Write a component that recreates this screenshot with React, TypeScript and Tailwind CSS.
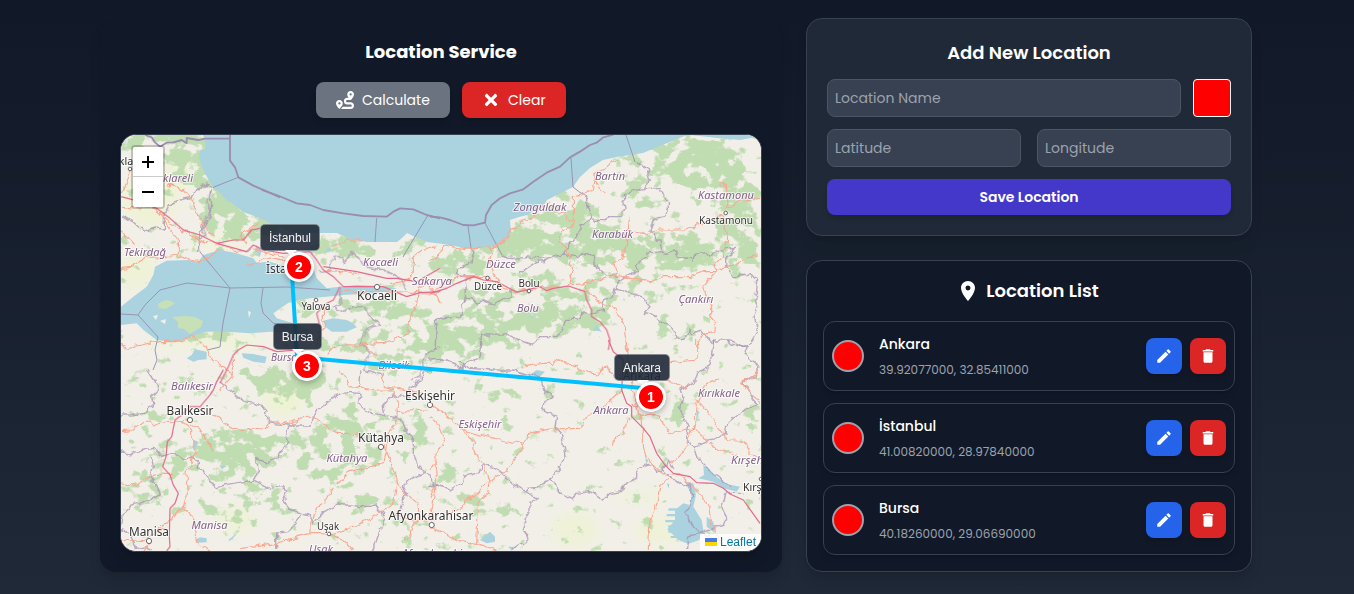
import { FaRoute } from "react-icons/fa6";
import { FaTimes } from "react-icons/fa";
import { MdDelete, MdEdit, MdLocationOn } from "react-icons/md";

type Place = { id: number; name: string; coords: string };

const places: Place[] = [
  { id: 1, name: "Ankara", coords: "39.92077000, 32.85411000" },
  { id: 2, name: "İstanbul", coords: "41.00820000, 28.97840000" },
  { id: 3, name: "Bursa", coords: "40.18260000, 29.06690000" },
];

/* Each map sheet is drawn on a grid three times finer than the map itself. */
type Sheet = { at: string; roads: string; motorways: string; borders: string; maritime?: string; water?: string };

const sheets: Sheet[] = [
  {
    at: "translate(120 134) scale(.33333)",
    roads: "M150 150 185 165 215 195 225 225 240 260 280 310M30 108 3 180M3 220 60 222 100 222M140 150 190 165M3 290 40 330M375 290 365 310 380 330M375 295 400 285",
    motorways: "",
    borders: "M280 160 262 150 240 155 232 168 215 190 190 195 150 210 130 240 130 285 100 282 70 292 40 265 10 245M270 165 268 190 275 210 272 240 265 260 240 295 235 350",
    maritime: "M75 3 95 10 105 25 120 38 140 26 160 25 185 18 200 28 200 12 235 18 255 14 330 14M330 0 330 80 345 100 355 130 400 155 440 172 480 190",
  },
  {
    at: "translate(110 190) scale(.33333)",
    roads:
      "M33 55 100 50 140 60 180 100 210 115 270 150 320 165M33 235 60 232 110 205 150 203 200 195 240 210 270 215 330 180M205 200 205 150 180 120 160 90M320 160 345 170 370 185 440 180 520 200M440 100 400 130 400 150M33 463 50 478 90 465 150 455 200 455 250 440 290 470 300 500 350 540 370 555M370 500 370 555 330 600M650 490 690 465 730 468 760 465 800 500M980 270 930 290 910 370 890 415 900 430 820 460 750 465M840 280 880 275 910 250 910 200 940 180 980 170M650 350 640 370 640 410 620 470M670 170 690 155 720 150 760 150M640 240 690 245 740 250M690 300 760 308 800 303 990 310M410 230 470 200 540 215",
    motorways:
      "M33 20 90 35 140 55 180 85 220 120 270 135 300 150 320 160 370 150 400 150 425 120 450 115M320 160 410 185 430 165 460 180 520 190 600 185 620 210 640 240 670 260 690 280 700 290 820 290 890 320 930 308 990 305M640 230 740 245 830 265 860 265 920 275 990 235M690 290 670 330 640 345 620 370 630 410M600 490 560 480 500 485 460 470 410 465 385 480 370 495 355 530 330 580",
    borders:
      "M300 0 290 40 305 60 275 110 285 140 265 150 270 185M690 290 690 340 670 350 700 370 730 350 760 350 780 380 810 400 780 410 765 430 750 460 780 490 760 540 820 560M990 470 960 480 940 510 930 560 900 575M630 245 660 240 665 210 680 195 705 215 730 190 745 200 760 230 820 240 880 270 890 300",
    maritime: "M455 0 500 15 560 40 600 45 640 60 700 70 760 78 830 80 850 65 870 55 910 58 950 75 990 85",
    water:
      "M33 350 70 320 110 290 130 255 135 230 170 212 235 210 265 215 280 195 330 180 380 190 430 205 440 218 480 215 530 230 610 235 620 265 650 295 690 290 740 285 800 288 860 295 830 305 760 312 700 315 650 320 600 325 540 335 490 370 500 385 550 400 600 420 590 432 480 425 420 430 350 425 290 425 240 440 210 455 180 455 140 450 100 420 80 400 33 405ZM230 505 245 495 255 478 290 485 290 508 265 510 250 515ZM395 490 430 492 470 500 465 520 430 515 400 503ZM640 392 670 385 710 390 730 400 740 412 710 425 665 425 648 412ZM600 170 620 165 605 195ZM440 165 455 180 450 200 435 180ZM655 170 665 180 645 190Z",
  },
  {
    at: "translate(110 370) scale(.33333)",
    roads:
      "M33 182 70 180 100 155 120 153 130 168 170 155 240 150M215 155 230 165 245 180 245 210 260 250 245 260 245 280 228 310 232 370 220 410 200 430 185 450 150 470M220 410 240 430 250 450 260 520 300 540M33 342 80 345 100 335 120 320 150 310 185 310M240 165 265 175 280 190 290 215 310 245M310 135 345 160 370 175 400 178 440 173 470 175 485 155 545 160 590 138 630 155 680 190 750 190M390 535 440 530 500 520 530 510 600 490 660 492 720 475 760 455 800 435 850 400 860 340 850 300 830 240 820 220M600 490 600 460 630 400 650 390 670 350M675 345 690 335 720 305 780 290 820 280 830 240 835 190 860 160 862 100 850 60 800 60 720 50 715 30 690 0M860 125 950 120M862 340 890 375 920 400 925 430 900 500 880 520M660 492 700 510 730 540M850 430 900 450 980 450M820 0 820 50 940 70M33 510 100 515 120 500 160 475M960 450 970 400 975 345M960 300 980 270M100 543 120 515",
    motorways: "M340 0 320 35 310 60 300 75 270 110 240 110 215 135 195 150 185 200 172 215 168 260 158 290 180 315 190 345 205 370 195 400 180 415 178 500 180 530 170 543",
    borders:
      "M33 245 60 255 80 245 100 240 130 235 160 260 180 252 200 255 220 268 245 255 265 275 265 295 290 315 300 335 320 350 380 338 430 330 445 310 440 265 470 280 500 265 520 235 535 215 530 185 545 165 600 165 610 140 625 120 660 90 690 70 720 68 750 70 745 100 760 115 790 130 870 145 885 180 910 190 910 260 930 285 940 310 960 315 970 345 985 345M330 35 370 70 400 95 430 100 460 110 470 115 470 140 480 160 540 165M430 330 480 355 520 350 530 365 520 390 540 420 580 430 600 435 610 455 640 430 680 405 720 405 750 410 800 408 825 440 800 510 790 543M580 430 550 470 530 485 500 490 500 540M120 255 130 290 120 320 140 345 150 370 100 400 60 410 40 430 33 480 60 495 80 535 110 530 125 540M940 310 900 330 880 350 890 370 865 430M110 0 130 30 145 60 125 80 130 110 100 130 60 135 33 135M750 0 745 60M985 0 945 0 940 20 900 60 900 75 850 75 820 110 825 140",
    water: "M255 510 270 502 290 505 290 517 265 518ZM250 210 265 215 255 245 250 230ZM355 510 380 490 378 495 360 513ZM330 285 350 288 335 298Z",
  },
  {
    at: "translate(430 130) scale(.33333)",
    roads:
      "M0 390 20 385 30 365 40 345 80 352 120 358 200 348 225 335 240 310 245 295 265 290 275 270 300 265 360 210M360 225 385 245 400 250 415 270 430 270 430 205 450 200 490 180 495 150 495 130 520 115 540 100 570 90M495 150 510 175 530 190M430 270 425 290 400 300 385 325 420 380 425 430 415 465 470 460 560 435 600 445 660 455 700 440 780 440 820 425 860 425 890 410 930 395 950 380 990 378M555 400 575 385 580 365 590 350 590 320 595 265M555 400 562 435M595 300 620 310 650 315 690 300 770 300 790 290 880 255 890 330 880 380 855 405 860 425 820 470 830 500 845 530 845 560 857 580 855 605 820 610 810 630 800 660M870 155 890 170 890 240 910 225 930 210 960 208 990 205M180 350 188 370 180 390 185 410 190 430 210 465M460 460 480 490 500 510 550 530 570 560 585 590 595 660M0 480 50 460 90 440 170 440 210 465 260 485 330 475 415 465M0 470 20 500 35 520",
    motorways: "M0 490 50 475 80 460 130 440 160 450 200 455 260 487 330 470 350 482 370 475 415 468 465 485 470 510 485 540 485 560 510 575 530 600 540 630 535 660",
    borders:
      "M615 95 640 108 660 120 650 140 655 155 645 175 615 182 590 190 580 200 585 240 570 260 535 260 520 272 485 270 480 240 470 225 470 200 455 190M640 180 690 175 700 200 715 215 715 240 700 260 670 270 660 300 680 330 690 330 695 365 650 370 650 385 620 400 620 425 600 430 570 450 560 475M690 365 710 370 730 360 755 385 790 390 795 370 815 365 830 375 850 368 910 355 905 370 890 385 890 410 910 440 930 440 960 430 980 450 975 500 985 520 975 560 985 600 960 640 940 650 900 630 850 630 850 645 815 600 785 610 775 600 765 628 745 628 720 590 690 575 670 555 640 550 660 530 640 505 600 490 580 480 555 475 550 500 520 510 520 545 490 550 460 545 450 565 410 565 400 600 380 620 330 620 300 645 270 635 240 615 155 615 150 660M215 375 235 382 290 380 345 385 365 382 400 375 420 340 450 310 450 290 485 270M400 375 440 380 470 370 490 380 500 410 530 435 570 440M122 355 132 370 115 410 80 415 80 430 105 440 110 500 95 530 95 560 50 565 20 570 15 660M110 500 140 520 160 510 190 520 240 500 240 480M270 430 290 415 320 395 350 390 365 382",
    maritime: "M0 260 30 262 60 270 100 285 130 286 165 278 168 255 185 225 210 205 240 190 280 178 310 155 350 128 390 110 420 82 450 65 480 45 500 38 520 22 550 14",
    water: "M300 560 315 553 303 565ZM490 600 515 605 500 585ZM750 628 770 622 755 632Z",
  },
  {
    at: "translate(430 340) scale(.33333)",
    roads:
      "M5 195 50 225 70 245 100 270 150 285 280 315 300 280 360 267 450 265 460 240 480 220 530 195 575 150M280 315 260 350 240 380 205 405 170 430 130 470 110 480 100 500 60 520M100 270 130 310 135 340 160 370 170 400 180 430 175 460 150 480 145 500 140 610 90 605 60 590 0 560M0 230 20 250 45 310 15 340 15 370 20 420 0 470M285 80 340 70 365 70 385 55 410 75 440 80 450 95 500 105 515 85 530 80 550 110 590 120M590 0 595 50 600 100 610 150 620 200 640 270 640 320 645 340 665 370 690 390 720 410 690 440 680 490 660 540 655 630M605 190 620 200 630 230 665 222 690 230 710 270 730 280 765 268 790 265 800 250 800 200 820 150 830 130 870 120M790 265 775 290 775 315 745 350 720 370M690 120 735 128 760 145 780 130M800 0 800 60 720 68M800 180 850 240 880 280 890 300 930 300 960 320 960 345 990 350M790 265 830 300 850 320 880 330 920 345M720 400 750 405 790 440 820 480 840 500 845 550 870 600M545 315 550 300 575 280 600 235M140 610 170 620 200 630M990 80 970 110 935 130 960 160 990 185",
    motorways: "M535 0 550 35 580 60 575 150 590 190 605 200 605 230 640 265 660 290 680 340 705 375 730 400 780 410 800 428 850 430 880 445 900 462 940 480 965 515 990 550",
    borders:
      "M0 60 45 58 80 75 90 90 110 65 150 55 155 10 145 0M85 65 120 85 190 90 250 90 300 105 330 110 345 155 370 170 345 185 340 210 355 220 380 230 375 260 395 280 400 320 405 350 395 380 355 420 320 445 280 450 245 430 220 400 190 385 160 375 150 395 105 405 100 430 60 450 20 435 0 440M355 415 380 430 390 460 430 480 440 460 480 455 520 480 540 460 575 455 580 435 620 415 620 385 665 370 680 395 710 380 715 360 730 385M280 450 325 475 300 490 300 515 290 530 280 570 295 600 240 630M850 0 850 30 840 80 800 100 790 130 750 150 760 180 745 200 765 240 775 260 770 290 790 320 800 350 830 380 855 405 900 440M790 320 820 310 870 290 885 280 880 260 910 235 980 190 970 180 940 130 975 110 985 75 945 45 955 20 900 15 890 0M700 385 720 410 760 440 780 435 785 470 770 520 790 560 810 580 880 555 890 530 875 500 890 460 940 460M770 630 773 588 810 580 840 590",
    water:
      "M765 425 790 430 797 470 790 500 815 540 820 570 808 600 775 612 745 600 730 585 712 568 735 540 735 510 760 490 780 495 785 465ZM820 375 835 385 860 410 890 432 930 440 920 455 880 445 850 425 805 415 822 405ZM150 600 180 575 195 590 195 605 170 610ZM830 530 850 545 855 580 830 560ZM235 620 260 620 245 632ZM715 505H745V512H715ZM710 522H740V529H710ZM706 540H740V547H706ZM714 556H740V562H714ZM715 572H745V578H715ZM722 588H755V594H722ZM710 430 718 432 716 446ZM645 355 655 360 650 372ZM800 210 808 215 798 250ZM320 90 345 95 325 115 300 105Z",
  },
];

/* Province limits that run straight across the sea. */
const seaBorders =
  "M213.3 187.3 238.3 177.3M200 252 230 288 223 323 220 347 207 350M121 314 138 315 145 305 160 290 187 283 230 288 287 287 330 290M138 315 158 337 155 350 157 360 153 370M263 288 261 303 263 313 273 323 287 328M376.7 218 375 242M428 215 407 250 403 257M468 226 471 248M485 223 502 255M571 158 573 187 582 194M626 135 635 162";

/* cx, cy, rx, ry, density */
const woods: number[][] = [
  [165, 142, 50, 9, 0.9], [192, 158, 24, 24, 1], [215, 190, 20, 22, 1], [222, 215, 20, 26, 1], [255, 228, 32, 14, 1],
  [345, 246, 28, 12, 0.9], [385, 252, 36, 9, 0.4], [415, 243, 20, 6, 0.6], [300, 308, 22, 7, 0.8], [372, 306, 42, 9, 0.95],
  [205, 338, 45, 7, 0.6], [150, 400, 24, 30, 0.35], [230, 375, 50, 12, 0.4], [290, 384, 38, 15, 1], [350, 345, 30, 12, 0.5],
  [405, 330, 40, 22, 0.55], [238, 450, 42, 22, 0.95], [180, 460, 50, 22, 0.5], [330, 450, 50, 32, 0.6], [355, 420, 25, 16, 0.8],
  [240, 500, 46, 22, 0.5], [150, 495, 20, 16, 0.7], [365, 503, 36, 9, 0.7], [410, 430, 20, 22, 0.6], [520, 242, 50, 17, 1],
  [460, 264, 26, 16, 0.85], [485, 296, 26, 10, 0.85], [590, 246, 44, 22, 1], [570, 215, 34, 16, 0.8], [700, 160, 50, 24, 0.9],
  [640, 182, 30, 26, 0.55], [725, 190, 40, 20, 0.65], [665, 252, 54, 20, 0.9], [742, 240, 22, 30, 0.8], [560, 318, 50, 14, 0.95],
  [480, 328, 56, 18, 0.9], [450, 350, 34, 10, 0.8], [620, 288, 60, 13, 0.5], [550, 290, 50, 12, 0.7], [448, 475, 22, 15, 0.6],
  [480, 505, 30, 14, 0.45], [515, 392, 45, 9, 0.45], [680, 410, 7, 14, 1], [753, 417, 10, 7, 1], [400, 365, 40, 14, 0.45],
  [140, 170, 20, 30, 0.2], [675, 330, 20, 14, 0.4], [600, 440, 10, 8, 0.3], [440, 540, 60, 12, 0.3], [735, 215, 24, 50, 0.4],
];

const fields: number[][] = [
  [150, 200, 28, 26, 0.9], [135, 270, 22, 20, 0.8], [205, 340, 60, 10, 0.7], [283, 400, 20, 16, 1], [235, 520, 20, 14, 0.8],
  [170, 175, 26, 20, 0.7], [575, 530, 24, 18, 0.8], [660, 530, 26, 14, 0.8], [640, 495, 30, 10, 0.4], [220, 240, 30, 10, 0.6],
];

const regionLabels: [string, number, number, number][] = [
  ["klareli", 178, 182, 30], ["Tekirdağ", 145, 256, 42], ["Kocaeli", 380.5, 266, 35], ["Sakarya", 432, 285, 40], ["Düzce", 501, 268, 30],
  ["Bolu", 528, 312, 22], ["Zonguldak", 540, 211, 53], ["Bartın", 610, 180, 30], ["Karabük", 612.5, 238, 41], ["Kastamonu", 726, 199, 56],
  ["Çankırı", 696, 303, 35], ["Bursa", 284, 361, 26], ["Bilecik", 394, 369, 31], ["Balıkesir", 192, 390, 42], ["Kütahya", 347, 462, 41],
  ["Eskişehir", 480, 428, 43], ["Ankara", 611, 414, 35], ["Kırıkkale", 719, 397, 42], ["Kırşehir", 751, 464, 40], ["Manisa", 209.5, 529, 36], ["Uşak", 321, 553, 24],
  ["Afyonkarahisar", 440, 557, 76],
];

const cityLabels: [string, number, number, number, number][] = [
  ["Kırklareli", 127, 165, 44, 10], ["İstanbul", 289, 273, 46, 12], ["Kocaeli", 377, 300, 40, 12], ["Yalova", 316, 310, 29, 10], ["Düzce", 488, 290, 28, 10],
  ["Bolu", 529, 287, 21, 10], ["Kastamonu", 726, 224, 54, 10.5], ["Balıkesir", 190, 415, 47, 12], ["Kütahya", 381, 442, 46, 12],
  ["Eskişehir", 430, 400, 50, 12], ["Afyonkarahisar", 431, 520, 85, 12], ["Uşak", 328, 530, 22, 10], ["Manisa", 149, 536, 40, 12],
  ["Kırşehir", 762, 491, 38, 10], ["Ankara", 642, 380, 38, 12],
];

const towns: number[][] = [
  [130, 169, 1.8], [377, 287, 2.6], [316, 300, 1.8], [487.5, 278, 1.8], [529, 291, 1.8], [725.7, 213, 1.8], [190, 420, 2.6],
  [381, 447, 2.6], [430, 405, 2.6], [431.7, 525, 2.6], [329, 534, 1.8], [149, 541, 2.6], [761, 479, 1.8],
];

function MapCanvas() {
  return (
    <svg viewBox="121 135 640 416" className="block h-full w-full" aria-hidden="true">
      <defs>
        <filter id="woodland" filterUnits="userSpaceOnUse" x="121" y="135" width="640" height="416" colorInterpolationFilters="sRGB">
          <feGaussianBlur in="SourceGraphic" stdDeviation="5" result="density" />
          <feTurbulence type="fractalNoise" baseFrequency=".07 .085" numOctaves="6" seed="11" result="noise" />
          <feComposite in="noise" in2="density" operator="arithmetic" k2="1" k3=".36" result="sum" />
          <feComponentTransfer in="sum" result="cut">
            <feFuncA type="linear" slope="10" intercept="-6.75" />
          </feComponentTransfer>
          <feFlood floodColor="#c0dcb1" />
          <feComposite in2="cut" operator="in" />
        </filter>
        <filter id="soft" filterUnits="userSpaceOnUse" x="100" y="115" width="680" height="456">
          <feGaussianBlur stdDeviation="6" />
        </filter>
        <filter id="wobble" filterUnits="userSpaceOnUse" x="121" y="135" width="640" height="416" colorInterpolationFilters="sRGB">
          <feTurbulence type="fractalNoise" baseFrequency=".13" numOctaves="2" seed="3" />
          <feDisplacementMap in="SourceGraphic" scale="7" xChannelSelector="R" yChannelSelector="G" />
        </filter>
      </defs>
      <rect x="121" y="135" width="640" height="416" fill="#f2efe9" />
      <g filter="url(#soft)" fill="#eef3d3">
        {fields.map(([x, y, rx, ry, o], i) => <ellipse key={i} cx={x} cy={y} rx={rx} ry={ry} fillOpacity={o} />)}
      </g>
      <g filter="url(#woodland)">
        {woods.map(([x, y, rx, ry, o], i) => <ellipse key={i} cx={x} cy={y} rx={rx} ry={ry} fillOpacity={o} />)}
      </g>
      <g fill="#aad3df">
        <path d="M203 135 205 142 206 149 200 151 199 158 202 167 207 177 213 187 220 193 226 200 232 203 243 212 260 218 277 227 297 233 320 233 337 233 350 239 367 242 397 242 402 238 407 233 415 237 427 242 443 244 470 249 497 246 505 242 511 232 510 220 519 217 527 215 543 207 547 200 563 192 573 187 580 177 590 168 603 160 617 157 643 153 657 147 670 142 687 135ZM690 135 717 138 740 140 757 137 761 135Z" />
        {sheets.map((s) => s.water && <path key={s.at} transform={s.at} d={s.water} />)}
      </g>
      <path fill="#c8e0b6" d="M172 317 187 316 195 317 203 321 201 327 190 334 184 329 178 328 178 322ZM158 304 163 301 168 300 175 303 171 306 165 309 159 308Z" />
      <path fill="#f2efe9" d="M153 316 158 315 156 320ZM160 321 166 319 165 324ZM248 311 251 312 249 318Z" />
      <g fill="none" strokeLinejoin="round">
        <g stroke="#a792b2" strokeOpacity=".75" filter="url(#wobble)">
          {sheets.map((s) => <path key={s.at} transform={s.at} d={s.borders} strokeWidth="4.2" />)}
        </g>
        <path d={seaBorders} stroke="#9a94b4" strokeWidth="1" />
        <g stroke="#9b8db0">
          {sheets.map((s) => s.maritime && <path key={s.at} transform={s.at} d={s.maritime} strokeWidth="5.5" />)}
        </g>
        <g stroke="#f9a890" filter="url(#wobble)">
          {sheets.map((s) => <path key={s.at} transform={s.at} d={s.roads} strokeWidth="3.4" />)}
        </g>
        <g stroke="#e46a8b">
          {sheets.map((s) => <path key={s.at} transform={s.at} d={s.motorways} strokeWidth="3.6" />)}
        </g>
      </g>
      <g fill="#fff" stroke="#555" strokeWidth=".9">
        {towns.map(([x, y, r], i) => <circle key={i} cx={x} cy={y} r={r} />)}
      </g>
      <g textAnchor="middle" strokeLinejoin="round" paintOrder="stroke" className="font-['Noto_Sans',sans-serif]">
        <g fill="#845f8a" stroke="#fff" strokeOpacity=".7" strokeWidth="2" fontStyle="italic" fontSize="10.7">
          {regionLabels.map(([t, x, y, w]) => <text key={t} x={x} y={y} textLength={w} lengthAdjust="spacingAndGlyphs">{t}</text>)}
        </g>
        <g fill="#333" stroke="#fff" strokeOpacity=".7" strokeWidth="2">
          {cityLabels.map(([t, x, y, w, s]) => <text key={t} x={x} y={y} fontSize={s} textLength={w} lengthAdjust="spacingAndGlyphs">{t}</text>)}
        </g>
      </g>
      <path d="M291 258 297 357 642 388" fill="none" stroke="#00bfff" strokeWidth="4" strokeLinecap="round" strokeLinejoin="round" />
    </svg>
  );
}

function Pin({ n, className }: { n: number; className: string }) {
  return (
    <div className={`absolute flex h-[30px] w-[30px] items-center justify-center rounded-full border-[3px] border-white bg-[#ff0000] text-sm font-bold text-white shadow-[0_2px_6px_rgba(0,0,0,0.3)] ${className}`}>
      {n}
    </div>
  );
}

function Tip({ label, className, arrow }: { label: string; className: string; arrow: string }) {
  return (
    <div className={`absolute flex h-[27px] items-center justify-center rounded-[5px] border border-white/40 bg-[#1f2937]/90 text-xs text-gray-100 ${className}`}>
      {label}
      <span className={`absolute top-full h-0 w-0 border-x-[6px] border-t-[6px] border-x-transparent border-t-white ${arrow}`} />
    </div>
  );
}

function MapView() {
  return (
    <div className="relative mt-4 h-[418px] overflow-hidden rounded-2xl border border-[#374151] bg-[#f2efe9] font-['Liberation_Sans',sans-serif] shadow-lg">
      <MapCanvas />
      <Tip label="İstanbul" className="left-[139px] top-[89px] w-[60px]" arrow="left-[24px]" />
      <Tip label="Bursa" className="left-[152px] top-[188px] w-[49px]" arrow="left-[18px]" />
      <Tip label="Ankara" className="left-[493px] top-[219px] w-[56px]" arrow="left-[22px]" />
      <Pin n={1} className="left-[515px] top-[247px]" />
      <Pin n={2} className="left-[163px] top-[117px]" />
      <Pin n={3} className="left-[171px] top-[216px]" />
      <div className="absolute left-[10px] top-[10px] rounded-[4px] border-2 border-black/20 bg-clip-padding">
        <button className="flex h-[30px] w-[30px] items-center justify-center rounded-t-[2px] border-b border-[#ccc] bg-white text-black" aria-label="Zoom in">
          <svg viewBox="0 0 12 12" className="h-3 w-3"><path d="M6 0V12M0 6H12" stroke="currentColor" strokeWidth="2" /></svg>
        </button>
        <button className="flex h-[30px] w-[30px] items-center justify-center rounded-b-[2px] bg-white text-black" aria-label="Zoom out">
          <svg viewBox="0 0 12 12" className="h-3 w-3"><path d="M0 6H12" stroke="currentColor" strokeWidth="2" /></svg>
        </button>
      </div>
      <div className="absolute bottom-0 right-0 flex h-[17px] items-center gap-[3px] bg-white/80 pb-px pl-[5px] pr-[5px] text-xs leading-4 text-[#0078a8]">
        <svg viewBox="0 0 12 8" className="h-2 w-3"><path fill="#4c7be1" d="M0 0h12v4H0z" /><path fill="#ffd500" d="M0 4h12v4H0z" /></svg>
        Leaflet
      </div>
    </div>
  );
}

const inputClass =
  "h-[38px] min-w-0 rounded-lg border border-[#4b5563] bg-[#374151] px-[7px] text-sm text-white placeholder:text-[#9ca3af]";

export default function App() {
  return (
    <main className="flex h-[594px] w-full gap-6 overflow-hidden bg-[linear-gradient(to_bottom,#111827,#1f2937)] pl-[100px] pt-[18px] font-[Poppins,Inter,sans-serif] text-white">
      <section className="h-[554px] w-[682px] rounded-2xl bg-[#111827] p-5 shadow-lg">
        <h1 className="text-center text-lg font-bold leading-7">Location Service</h1>
        <div className="mt-4 flex justify-center gap-3 text-sm">
          <button className="flex h-9 w-[134px] items-center gap-2 rounded-lg bg-[#6b7280] px-5 shadow-md">
            <FaRoute size={18} />
            <span>Calculate</span>
          </button>
          <button className="flex h-9 w-[104px] items-center gap-2 rounded-lg bg-[#dc2626] px-5 shadow-md">
            <FaTimes size={18} />
            <span>Clear</span>
          </button>
        </div>
        <MapView />
      </section>

      <div className="flex w-[446px] flex-col gap-6">
        <section className="h-[218px] rounded-2xl border border-[#374151] bg-[#1f2937] p-5 shadow-lg">
          <h2 className="text-center text-lg font-semibold leading-7">Add New Location</h2>
          <div className="mt-3 flex gap-3">
            <input className={`${inputClass} flex-1`} placeholder="Location Name" />
            <div className="h-[38px] w-[38px] rounded-[4px] border border-white bg-[#ff0000]" />
          </div>
          <div className="mt-3 grid grid-cols-2 gap-4">
            <input className={inputClass} placeholder="Latitude" />
            <input className={inputClass} placeholder="Longitude" />
          </div>
          <button className="mt-3 h-9 w-full rounded-lg bg-[#4338ca] text-sm font-semibold shadow-md">Save Location</button>
        </section>

        <section className="h-[312px] rounded-2xl border border-[#374151] bg-[#111827] p-4 shadow-lg">
          <h2 className="flex items-center justify-center gap-1.5 pr-[3px] text-lg font-semibold leading-7">
            <MdLocationOn size={24} />
            <span>Location List</span>
          </h2>
          <ul className="mt-4 flex flex-col gap-3">
            {places.map((p) => (
              <li key={p.id} className="flex h-[70px] items-center rounded-xl border border-[#374151] px-2 shadow-md">
                <span className="h-8 w-8 rounded-full border-2 border-[#9ca3af] bg-[#ff0000]" />
                <div className="ml-[15px] flex-1">
                  <p className="text-sm font-medium leading-5">{p.name}</p>
                  <p className="mt-2 text-xs leading-4 text-[#9ca3af]">{p.coords}</p>
                </div>
                <div className="flex gap-2">
                  <button className="flex h-9 w-9 items-center justify-center rounded-lg bg-[#2563eb] shadow-md" aria-label="Edit"><MdEdit size={18} /></button>
                  <button className="flex h-9 w-9 items-center justify-center rounded-lg bg-[#dc2626] shadow-md" aria-label="Delete"><MdDelete size={18} /></button>
                </div>
              </li>
            ))}
          </ul>
        </section>
      </div>
    </main>
  );
}
